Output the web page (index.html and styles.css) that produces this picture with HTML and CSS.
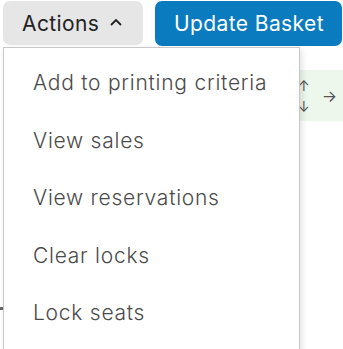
FILE: index.html
```html
<!DOCTYPE html>
<html lang="en">
<head>
  <meta charset="UTF-8" />
  <title>Basket actions</title>
  <link rel="stylesheet" href="styles.css">
</head>
<body>
  <div class="toolbar">
    <button class="actions-btn">Actions <span class="chevron"><svg width="14" height="10" viewBox="0 0 14 10"><path d="M2 8 L7 3 L12 8" fill="none" stroke="#222" stroke-width="1.8"/></svg></span></button>
    <button class="update-btn">Update Basket</button>
  </div>
  <div class="content">
    <div class="move-pad">
      <div class="updown"><span>&uarr;</span><span>&darr;</span></div>
      <span class="right">&rarr;</span>
    </div>
    <div class="stray"></div>
  </div>
  <ul class="dropdown">
    <li>Add to printing criteria</li>
    <li>View sales</li>
    <li>View reservations</li>
    <li>Clear locks</li>
    <li>Lock seats</li>
  </ul>
</body>
</html>
```
FILE: styles.css
```css
body {
  margin: 0;
  font-family: 'Inter', 'Open Sans', sans-serif;
  background: #fff;
  width: 343px;
  height: 349px;
  overflow: hidden;
  position: relative;
}
.toolbar {
  display: flex;
  gap: 12px;
  padding: 1px 1px 0 3px;
}
.actions-btn, .update-btn {
  font-family: inherit;
  font-size: 21px;
  border: none;
  border-radius: 7px;
  cursor: pointer;
  display: flex;
  align-items: center;
  letter-spacing: 0.4px;
}
.actions-btn {
  width: 140px;
  height: 44px;
  background: #e6e6e6;
  color: #222;
  padding: 0 0 0 19px;
  gap: 10px;
}
.chevron {
  display: flex;
  margin-top: -2px;
}
.update-btn {
  flex: 1;
  height: 45px;
  background: #0a7bbf;
  color: #fff;
  padding: 0 0 0 19px;
}
.content {
  padding: 24px 0 0 280px;
}
.move-pad {
  width: 63px;
  height: 51px;
  background: #edf7ec;
  border-radius: 10px 0 0 10px;
  display: flex;
  align-items: center;
  justify-content: flex-end;
  gap: 12px;
  color: #555;
  font-size: 14px;
}
.updown {
  display: flex;
  flex-direction: column;
  gap: 4px;
}
.right {
  margin-right: 6px;
  font-size: 16px;
}
.stray {
  width: 3px;
  height: 3px;
  background: #666;
  margin: 186px 0 0 -280px;
}
.dropdown {
  position: absolute;
  top: 47px;
  left: 3px;
  width: 295px;
  height: 299px;
  margin: 0;
  padding: 14px 0 0;
  list-style: none;
  background: #fff;
  border: 1px solid #c8c8c8;
  box-shadow: 2px 2px 6px rgba(0, 0, 0, 0.12);
}
.dropdown li {
  padding: 0 0 0 29px;
  height: 57.6px;
  line-height: 42px;
  font-size: 21px;
  font-weight: 300;
  letter-spacing: 0.75px;
  color: #4a4a4a;
}
```
